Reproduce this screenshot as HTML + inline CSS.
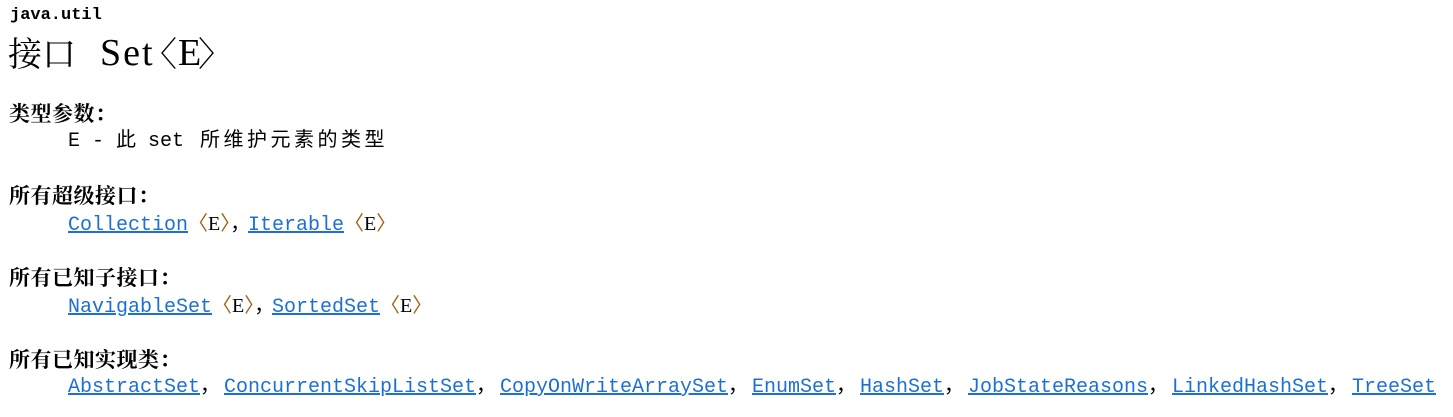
<!DOCTYPE html>
<html><head><meta charset="utf-8"><style>
body{margin:0;width:1453px;height:417px;background:#fff;position:relative;overflow:hidden;color:#000}
.a{position:absolute;white-space:nowrap;line-height:1}
.m{font-family:"Liberation Mono","Noto Sans CJK SC",monospace;font-size:20px}
.h{font-family:"Noto Serif CJK SC","Noto Sans CJK SC",serif;font-size:21px;font-weight:bold;letter-spacing:0.5px}
a{color:#1c6fd6;text-decoration:underline}
.b{color:#a8600c}
.e{font-family:"Liberation Serif",serif;color:#000}
.c{letter-spacing:3.5px}
.t{font-family:"Noto Serif CJK SC",serif;font-size:34px}
.ts{font-family:"Liberation Serif",serif;font-size:38px}
</style></head><body>
<div class="a" style="left:10px;top:7px;font-family:'Liberation Mono',monospace;font-size:17px;font-weight:bold">java.util</div>
<div class="a t" style="left:8px;top:35px">接口</div>
<div class="a ts" style="left:100px;top:34px;letter-spacing:2px">Set</div>
<div class="a t" style="left:143px;top:35px">〈</div>
<div class="a ts" style="left:178px;top:34px">E</div>
<div class="a t" style="left:198px;top:35px">〉</div>

<div class="a h" style="left:9px;top:103px">类型参数：</div>
<div class="a m" style="left:68px;top:132px">E - 此 set</div>
<div class="a m c" style="left:200px;top:132px">所维护元素的类型</div>

<div class="a h" style="left:9px;top:185px">所有超级接口：</div>
<div class="a m" style="left:68px;top:214px"><a>Collection</a><span class="b">〈</span><span class="e">E</span><span class="b">〉</span>，</div>
<div class="a m" style="left:248px;top:214px"><a>Iterable</a><span class="b">〈</span><span class="e">E</span><span class="b">〉</span></div>

<div class="a h" style="left:9px;top:267px">所有已知子接口：</div>
<div class="a m" style="left:68px;top:296px"><a>NavigableSet</a><span class="b">〈</span><span class="e">E</span><span class="b">〉</span>，</div>
<div class="a m" style="left:272px;top:296px"><a>SortedSet</a><span class="b">〈</span><span class="e">E</span><span class="b">〉</span></div>

<div class="a h" style="left:9px;top:349px">所有已知实现类：</div>
<div class="a m" style="left:68px;top:378px"><a>AbstractSet</a>，</div>
<div class="a m" style="left:224px;top:378px"><a>ConcurrentSkipListSet</a>，</div>
<div class="a m" style="left:500px;top:378px"><a>CopyOnWriteArraySet</a>，</div>
<div class="a m" style="left:752px;top:378px"><a>EnumSet</a>，</div>
<div class="a m" style="left:860px;top:378px"><a>HashSet</a>，</div>
<div class="a m" style="left:968px;top:378px"><a>JobStateReasons</a>，</div>
<div class="a m" style="left:1172px;top:378px"><a>LinkedHashSet</a>，</div>
<div class="a m" style="left:1352px;top:378px"><a>TreeSet</a></div>
</body></html>
